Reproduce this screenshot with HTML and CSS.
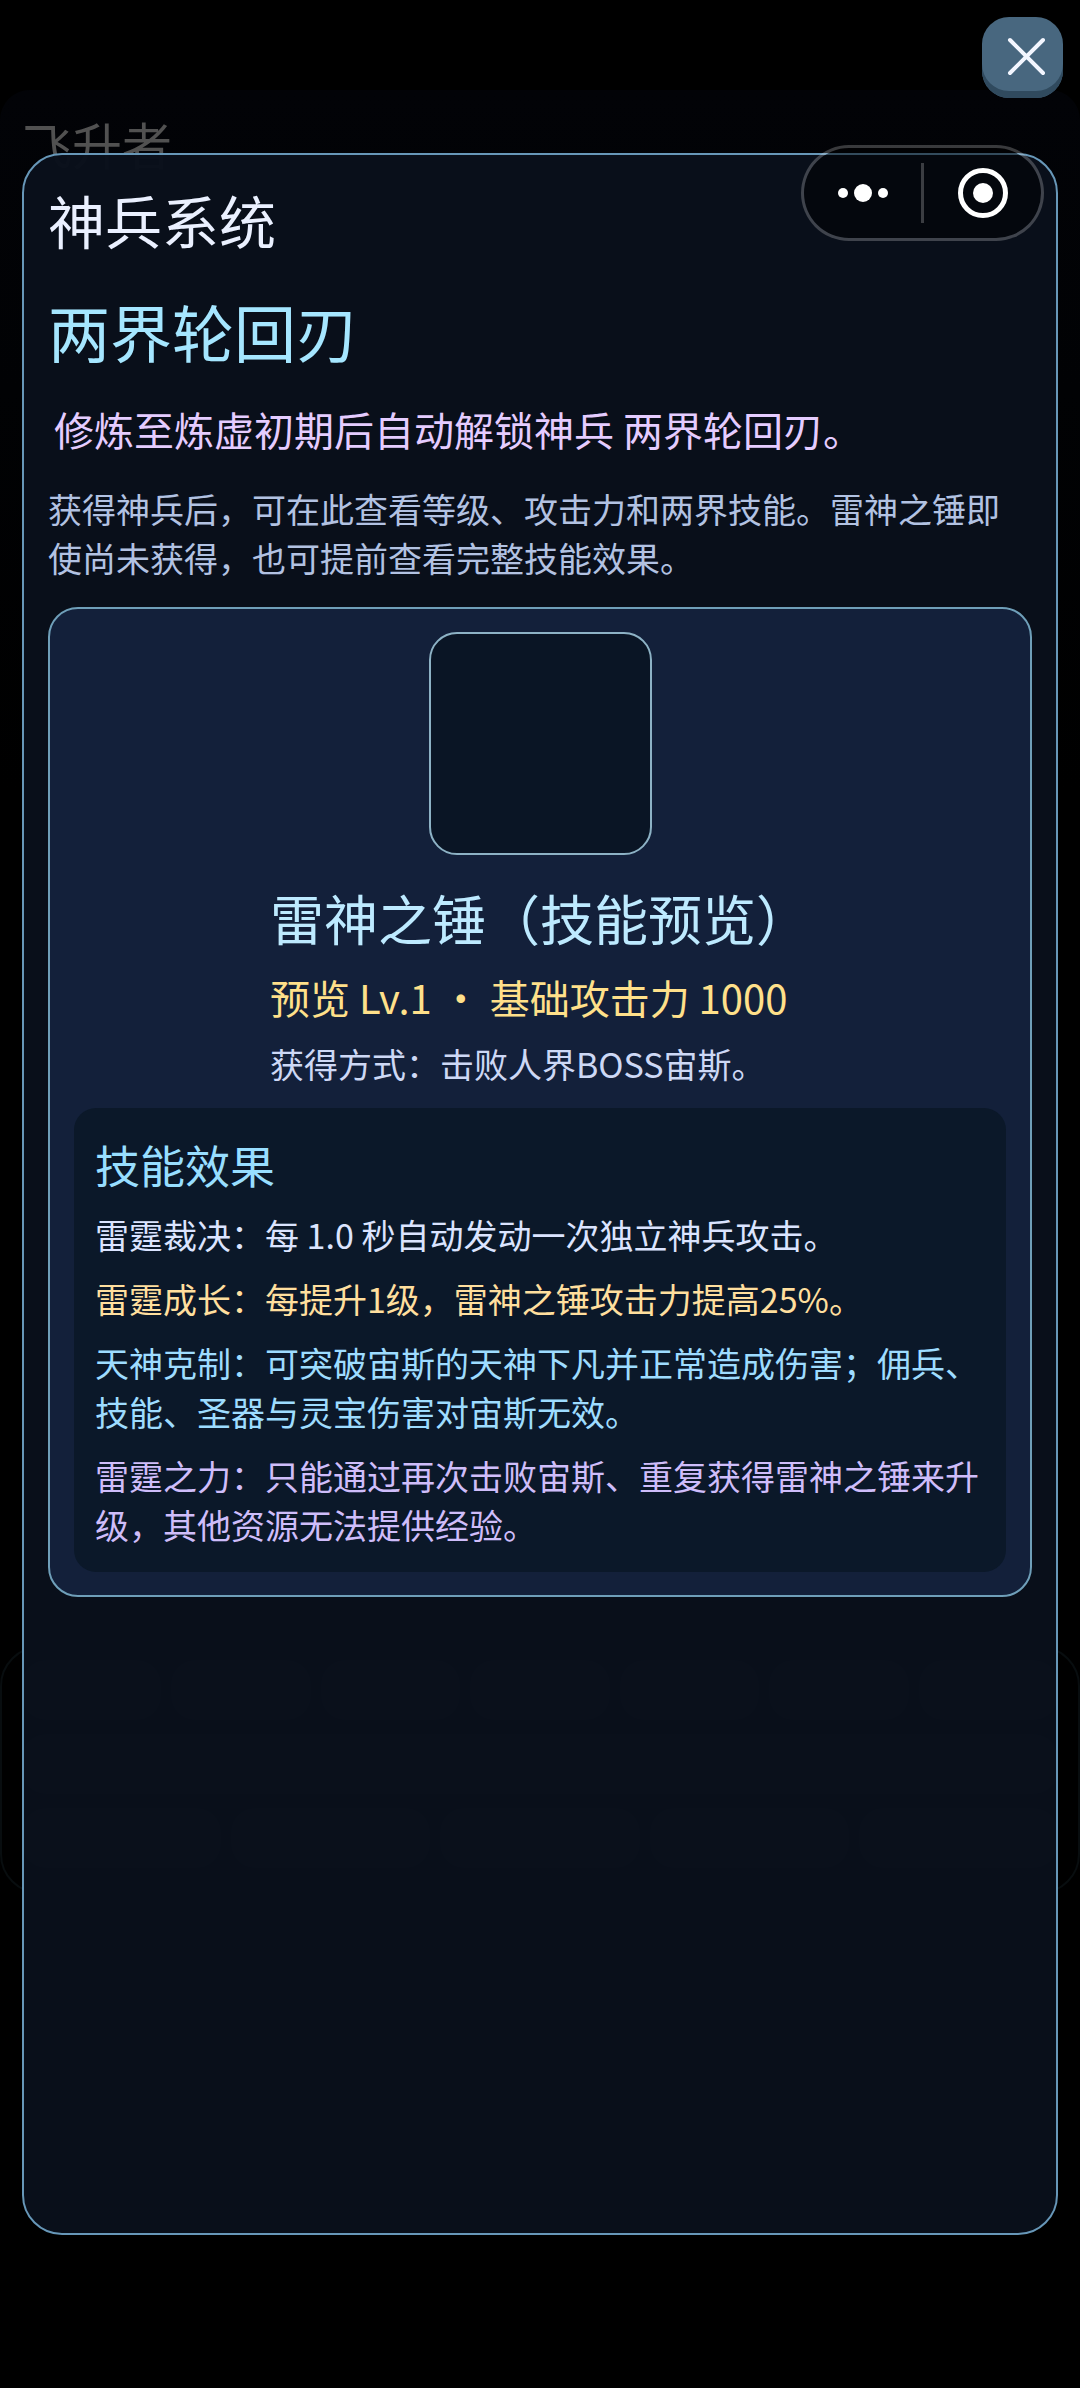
FILE: index.html
```
<!DOCTYPE html>
<html lang="zh-CN">
<head>
<meta charset="utf-8">
<meta name="viewport" content="width=device-width, initial-scale=1">
<title>神兵系统</title>
<link rel="stylesheet" href="styles.css">
</head>
<body>
<div class="home" aria-hidden="true">
  <div class="home-card">飞升者</div>
  <div class="home-dock">
    <div class="dock-row"><i></i><i></i><i></i><i></i><i></i><i></i><i></i></div>
    <div class="dock-row"><i></i></div>
    <div class="dock-row"><i></i><i></i><i></i><i></i><i></i></div>
  </div>
</div>

<div class="overlay">
  <main class="panel">
    <h1 class="panel-title">神兵系统</h1>
    <h2 class="weapon-title">两界轮回刃</h2>
    <p class="unlock">修炼至炼虚初期后自动解锁神兵 两界轮回刃。</p>
    <p class="intro">获得神兵后，可在此查看等级、攻击力和两界技能。雷神之锤即使尚未获得，也可提前查看完整技能效果。</p>

    <section class="card">
      <div class="portrait"></div>
      <div class="summary">
        <h3 class="card-title">雷神之锤（技能预览）</h3>
        <p class="stats">预览 Lv.1 · 基础攻击力 1000</p>
        <p class="source">获得方式：击败人界BOSS宙斯。</p>
      </div>
      <div class="skills">
        <h4 class="skills-title">技能效果</h4>
        <p class="skill skill-strike">雷霆裁决：每 1.0 秒自动发动一次独立神兵攻击。</p>
        <p class="skill skill-growth">雷霆成长：每提升1级，雷神之锤攻击力提高25%。</p>
        <p class="skill skill-counter">天神克制：可突破宙斯的天神下凡并正常造成伤害；佣兵、技能、圣器与灵宝伤害对宙斯无效。</p>
        <p class="skill skill-power">雷霆之力：只能通过再次击败宙斯、重复获得雷神之锤来升级，其他资源无法提供经验。</p>
      </div>
    </section>
  </main>
</div>

<button class="close" type="button" aria-label="关闭">
  <svg width="81" height="81" viewBox="0 0 81 81"><path d="M28 23 61 56M61 23 28 56" fill="none" stroke="#f3f6ff" stroke-width="4" stroke-linecap="round"/></svg>
</button>

<div class="capsule">
  <button class="capsule-button" type="button" aria-label="更多">
    <svg width="60" height="50" viewBox="0 0 60 50" fill="#fff"><circle cx="10" cy="25" r="5"/><circle cx="30" cy="25" r="9"/><circle cx="50" cy="25" r="5"/></svg>
  </button>
  <span class="capsule-divider"></span>
  <button class="capsule-button" type="button" aria-label="退出">
    <svg width="50" height="50" viewBox="0 0 50 50"><circle cx="25" cy="25" r="22.5" fill="none" stroke="#fff" stroke-width="5"/><circle cx="25" cy="25" r="10" fill="#fff"/></svg>
  </button>
</div>
</body>
</html>
```
FILE: styles.css
```
* {
  box-sizing: border-box;
}

body {
  position: relative;
  min-height: 100vh;
  margin: 0;
  background: #000;
  font-family: "Noto Sans CJK SC", sans-serif;
  font-weight: 400;
}

h1, h2, h3, h4, p {
  margin: 0;
  font-weight: 400;
}

button {
  padding: 0;
  border: 0;
  background: none;
  cursor: pointer;
}

svg {
  display: block;
}

/* Dimmed game screen underneath the dialog */
.home {
  position: absolute;
  inset: 0;
  overflow: hidden;
  padding-top: 90px;
}

.home-card {
  height: 1556px;
  padding: 17px 22px;
  border-radius: 30px;
  background: linear-gradient(#020307, #010204 300px, #000 700px);
  color: #515151;
  font-size: 50px;
  line-height: 72px;
}

.home-dock {
  display: grid;
  gap: 14px;
  padding: 12px 20px 24px;
  border: 2px solid #080d0f;
  border-radius: 40px;
}

.dock-row {
  display: flex;
  gap: 10px;
}

.dock-row i {
  flex: 1;
  height: 60px;
  border-radius: 24px;
  background: #1e2834;
}

/* Dialog */
.overlay {
  position: relative;
  display: flex;
  min-height: 100vh;
  padding: 153px 22px;
}

.panel {
  flex: 1;
  min-width: 0;
  padding: 24px;
  border: 2px solid #6797b8;
  border-radius: 40px;
  background: rgba(9, 15, 27, 0.97);
}

.panel-title {
  color: #eaf0ff;
  font-size: 57px;
  line-height: 80px;
}

.weapon-title {
  margin-top: 28px;
  color: #a5e6ff;
  font-size: 62px;
  line-height: 88px;
}

.unlock {
  margin-top: 25px;
  padding-left: 6px;
  color: #e5ccff;
  font-size: 40px;
  line-height: 58px;
}

.intro {
  margin-top: 26px;
  color: #b2c2e2;
  font-size: 34px;
  line-height: 49px;
}

.card {
  display: flex;
  flex-direction: column;
  align-items: center;
  margin-top: 25px;
  padding: 23px 24px;
  border: 2px solid #6f9fb9;
  border-radius: 30px;
  background: #13203a;
}

.portrait {
  width: 223px;
  height: 223px;
  border: 2px solid #8db2c5;
  border-radius: 28px;
  background: #0a1525;
}

.card-title {
  margin-top: 28px;
  color: #bdeaff;
  font-size: 54px;
  line-height: 70px;
}

.stats {
  margin-top: 18px;
  color: #ffe08a;
  font-size: 40px;
  line-height: 53px;
}

.source {
  margin-top: 15px;
  color: #cdd8f5;
  font-size: 34px;
  line-height: 49px;
}

.skills {
  align-self: stretch;
  margin-top: 20px;
  padding: 26px 21px 23px;
  border-radius: 22px;
  background: #0b1829;
}

.skills-title {
  color: #98deff;
  font-size: 45px;
  line-height: 61px;
}

.skill {
  margin-top: 15px;
  font-size: 34px;
  line-height: 49px;
}

.skill-strike {
  color: #dbe4ff;
}

.skill-growth {
  color: #ffdf9e;
}

.skill-counter {
  color: #9edcff;
}

.skill-power {
  color: #cfbdfa;
}

/* Floating controls */
.close {
  position: absolute;
  top: 17px;
  right: 17px;
  border-radius: 27px;
  background: #48677f;
  box-shadow: inset 0 -7px #304a5e;
}

.capsule {
  position: absolute;
  top: 145px;
  right: 36px;
  display: flex;
  align-items: center;
  width: 243px;
  height: 96px;
  border: 3px solid rgba(255, 255, 255, 0.22);
  border-radius: 48px;
  background: rgba(0, 0, 0, 0.5);
  background-clip: padding-box;
}

.capsule-button {
  display: flex;
  flex: 1;
  justify-content: center;
}

.capsule-divider {
  width: 3px;
  height: 60px;
  background: rgba(255, 255, 255, 0.22);
}
```
